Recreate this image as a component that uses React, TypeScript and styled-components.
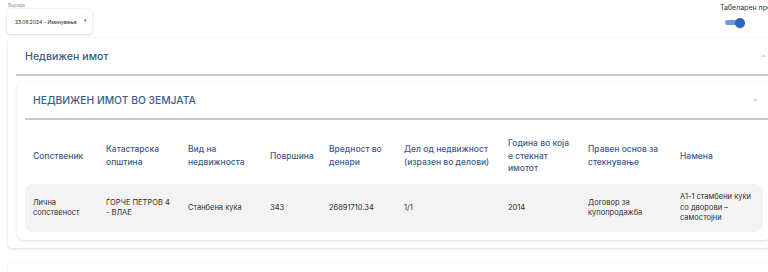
import React from "react";
import styled, { createGlobalStyle } from "styled-components";

const GlobalStyle = createGlobalStyle`
  html, body {
    margin: 0;
    padding: 0;
    background: #ffffff;
    overflow: hidden;
    font-family: Inter, "Noto Sans", sans-serif;
  }
`;

const Page = styled.div`
  width: 790px;
  display: flex;
  flex-direction: column;
`;

const TopBar = styled.div`
  display: flex;
  align-items: flex-start;
  padding: 3px 0 0 7px;
  height: 35px;
  box-sizing: border-box;
`;

const VersionField = styled.div`
  display: flex;
  flex-direction: column;
`;

const FieldLabel = styled.span`
  font-size: 4.5px;
  line-height: 5px;
  color: #8a8a8a;
  margin-left: 1px;
`;

const SelectBox = styled.div`
  margin-top: 1px;
  width: 85px;
  height: 25px;
  box-sizing: border-box;
  border-radius: 3px;
  box-shadow: 0 1px 3px rgba(0, 0, 0, 0.14), 0 0 1px rgba(0, 0, 0, 0.12);
  display: flex;
  align-items: center;
  justify-content: space-between;
  padding: 0 5px 0 8px;
  font-size: 5px;
  color: #222;
`;

const Caret = styled.span`
  font-size: 5px;
  color: #666;
  margin-top: -3px;
`;

const ViewToggle = styled.div`
  margin-left: auto;
  width: 70px;
  display: flex;
  flex-direction: column;
  align-items: flex-start;
`;

const ToggleLabel = styled.span`
  font-size: 7px;
  line-height: 9px;
  color: #333;
  white-space: nowrap;
`;

const Track = styled.div`
  position: relative;
  margin: 8px 0 0 5px;
  width: 18px;
  height: 5px;
  border-radius: 3px;
  background: #6f9ad8;
`;

const Thumb = styled.div`
  position: absolute;
  right: -2px;
  top: -2.5px;
  width: 10px;
  height: 10px;
  border-radius: 50%;
  background: #2b66bf;
  box-shadow: 0 1px 1px rgba(0, 0, 0, 0.2);
`;

const Card = styled.div<{ $inner?: boolean }>`
  background: #fff;
  border-radius: ${(p) => (p.$inner ? "6px" : "4px")};
  box-shadow: 0 1px 3px rgba(0, 0, 0, 0.13), 0 0 1px rgba(0, 0, 0, 0.08);
  margin: ${(p) => (p.$inner ? "6px 9px 8px 9px" : "3px 10px 0 8px")};
`;

const Header = styled.div<{ $inner?: boolean }>`
  height: 36px;
  display: flex;
  align-items: center;
  justify-content: space-between;
  border-bottom: 2px solid #bccadc;
  margin-left: 8px;
  padding: ${(p) => (p.$inner ? "0 13px 0 8px" : "0 14px 0 9px")};
`;

const Title = styled.span<{ $caps?: boolean }>`
  color: #3d5b8b;
  font-size: ${(p) => (p.$caps ? "10.3px" : "10.6px")};
  font-weight: 500;
  text-transform: ${(p) => (p.$caps ? "uppercase" : "none")};
`;

const Chevron = () => (
  <svg width="5" height="4" viewBox="0 0 5 4">
    <path d="M0.7 3 L2.5 1.2 L4.3 3" fill="none" stroke="#9a9a9a" strokeWidth="0.9" />
  </svg>
);

const TableWrap = styled.div`
  padding: 8px;
`;

const Row = styled.div<{ $head?: boolean }>`
  display: grid;
  grid-template-columns: 73px 82px 82px 59px 75px 104px 80px 92px 91px;
  align-items: center;
  min-height: ${(p) => (p.$head ? "56px" : "48px")};
  background: ${(p) => (p.$head ? "transparent" : "#f3f3f3")};
  border-radius: 8px;
`;

const Cell = styled.div<{ $head?: boolean }>`
  padding: 0 8px;
  font-size: ${(p) => (p.$head ? "8.5px" : "7.5px")};
  line-height: ${(p) => (p.$head ? "12.7px" : "10.5px")};
  font-weight: ${(p) => (p.$head ? 500 : 400)};
  color: ${(p) => (p.$head ? "#3d5b8b" : "#2e2e2e")};
`;

const NextCard = styled.div`
  margin: 15px 10px 0 8px;
  height: 30px;
  border-radius: 4px;
  box-shadow: 0 1px 3px rgba(0, 0, 0, 0.1), 0 0 1px rgba(0, 0, 0, 0.06);
`;

const columns = [
  "Сопственик",
  "Катастарска општина",
  "Вид на недвижноста",
  "Површина",
  "Вредност во денари",
  "Дел од недвижност (изразен во делови)",
  "Година во која е стекнат имотот",
  "Правен основ за стекнување",
  "Намена",
];

const values = [
  "Лична сопственост",
  "ЃОРЧЕ ПЕТРОВ 4 - ВЛАЕ",
  "Станбена куќа",
  "343",
  "26891710.34",
  "1/1",
  "2014",
  "Договор за купопродажба",
  "А1-1 стамбени куќи со дворови – самостојни",
];

export default function App() {
  return (
    <>
      <GlobalStyle />
      <Page>
        <TopBar>
          <VersionField>
            <FieldLabel>Верзија</FieldLabel>
            <SelectBox>
              <span>23.06.2024 - Иминување</span>
              <Caret>▾</Caret>
            </SelectBox>
          </VersionField>
          <ViewToggle>
            <ToggleLabel>Табеларен преглед</ToggleLabel>
            <Track>
              <Thumb />
            </Track>
          </ViewToggle>
        </TopBar>

        <Card>
          <Header>
            <Title>Недвижен имот</Title>
            <Chevron />
          </Header>
          <Card $inner>
            <Header $inner>
              <Title $caps>Недвижен имот во земјата</Title>
              <Chevron />
            </Header>
            <TableWrap>
              <Row $head>
                {columns.map((c) => (
                  <Cell $head key={c}>
                    {c}
                  </Cell>
                ))}
              </Row>
              <Row>
                {values.map((v) => (
                  <Cell key={v}>{v}</Cell>
                ))}
              </Row>
            </TableWrap>
          </Card>
        </Card>
        <NextCard />
      </Page>
    </>
  );
}
